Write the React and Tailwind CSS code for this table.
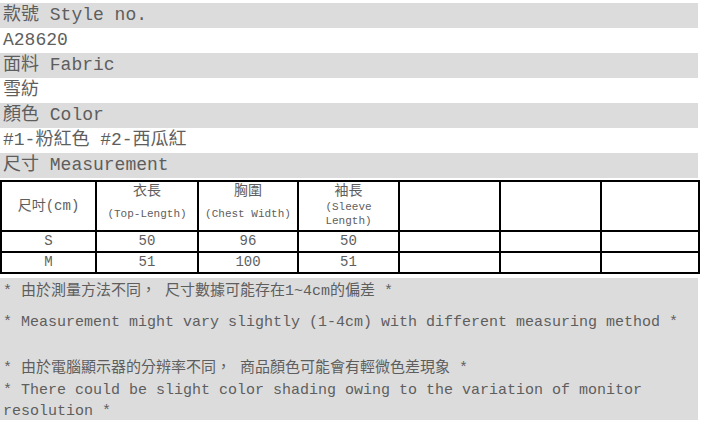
const FONT = { fontFamily: '"Liberation Mono", "Noto Sans CJK TC", monospace' };

const INFO = [
  { label: "款號 Style no.", value: "A28620" },
  { label: "面料 Fabric", value: "雪紡" },
  { label: "顏色 Color", value: "#1-粉紅色 #2-西瓜紅" },
];

const ROWS = [
  ["S", "50", "96", "50"],
  ["M", "51", "100", "51"],
];

const COLS = ["w-[95px]", "w-[102px]", "w-[100px]", "w-[101px]", "w-[101px]", "w-[101px]", "w-[98px]"];

export default function App() {
  return (
    <div className="w-[702px] h-[422px] bg-white pt-[3px] text-[#5e5e5e]" style={FONT}>
      {INFO.map((r) => (
        <div key={r.label}>
          <div className="w-[698px] h-[25px] bg-[#dcdcdc] px-[3px] text-[18px] leading-[25px] whitespace-nowrap">{r.label}</div>
          <div className="w-[698px] h-[25px] px-[3px] text-[18px] leading-[25px] whitespace-nowrap">{r.value}</div>
        </div>
      ))}
      <div className="w-[698px] h-[25px] bg-[#dcdcdc] px-[3px] text-[18px] leading-[25px] whitespace-nowrap">尺寸 Measurement</div>

      <table className="mt-[2px] w-[698px] border-collapse border-2 border-black table-fixed">
        <colgroup>
          {COLS.map((c, i) => <col key={i} className={c} />)}
        </colgroup>
        <tbody>
          <tr className="h-[50px]">
            <td className="border-2 border-black text-center text-[14px]">尺吋(cm)</td>
            <td className="border-2 border-black text-center align-top">
              <div className="text-[14px] leading-[18px]">衣長</div>
              <div className="mt-[7px] text-[11px] leading-[14px] whitespace-nowrap">(Top-Length)</div>
            </td>
            <td className="border-2 border-black text-center align-top">
              <div className="text-[14px] leading-[18px]">胸圍</div>
              <div className="mt-[7px] text-[11px] leading-[14px] whitespace-nowrap">(Chest Width)</div>
            </td>
            <td className="border-2 border-black text-center align-top">
              <div className="text-[14px] leading-[18px]">袖長</div>
              <div className="text-[11px] leading-[14px]">(Sleeve</div>
              <div className="text-[11px] leading-[14px]">Length)</div>
            </td>
            <td className="border-2 border-black" />
            <td className="border-2 border-black" />
            <td className="border-2 border-black" />
          </tr>
          {ROWS.map((r) => (
            <tr key={r[0]} className="h-[21px]">
              {r.map((v, i) => (
                <td key={i} className="border-2 border-black text-center text-[14px] leading-[17px]">{v}</td>
              ))}
              <td className="border-2 border-black" />
              <td className="border-2 border-black" />
              <td className="border-2 border-black" />
            </tr>
          ))}
        </tbody>
      </table>

      <div className="mt-[4px] w-[698px] h-[142px] bg-[#dcdcdc] px-[3px] pt-[3px] text-[15px]">
        <div className="leading-[22px]">* 由於測量方法不同， 尺寸數據可能存在1~4cm的偏差 *</div>
        <div className="mt-[9px] leading-[22px] whitespace-nowrap">* Measurement might vary slightly (1-4cm) with different measuring method *</div>
        <div className="mt-[24px] leading-[22px]">* 由於電腦顯示器的分辨率不同， 商品顏色可能會有輕微色差現象 *</div>
        <div className="leading-[21px]">* There could be slight color shading owing to the variation of monitor resolution *</div>
      </div>
    </div>
  );
}
